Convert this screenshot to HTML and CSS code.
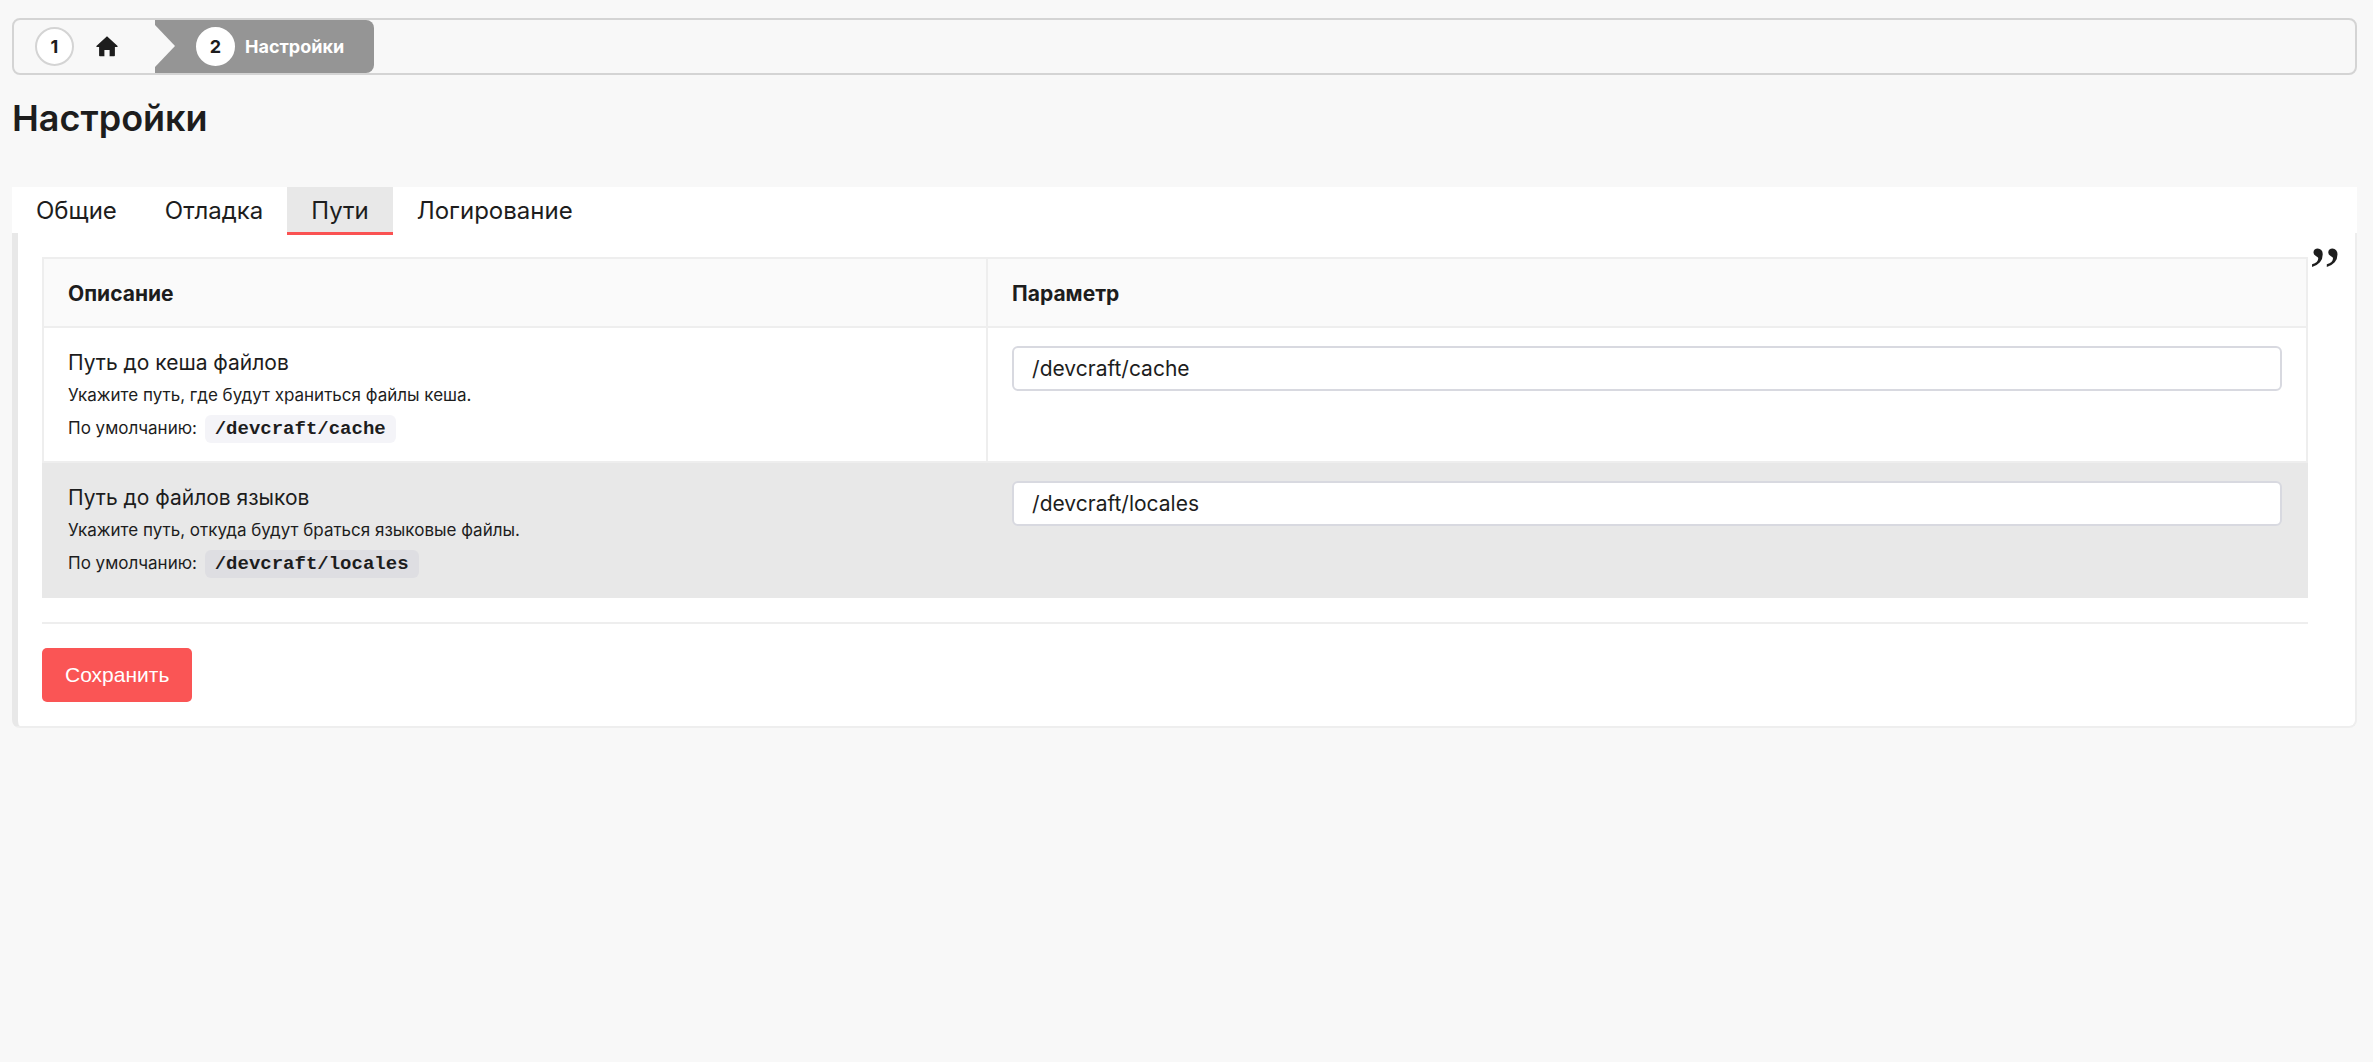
FILE: index.html
```html
<!DOCTYPE html>
<html lang="ru">
<head>
  <meta charset="UTF-8">
  <meta name="viewport" content="width=device-width, initial-scale=1.0">
  <title>Настройки</title>
  <link rel="stylesheet" href="styles.css">
</head>
<body>
  <nav class="breadcrumb">
    <a class="step" href="#">
      <span class="step-number">1</span>
      <svg class="home-icon" viewBox="0 0 22 21" aria-hidden="true">
        <path d="M11 0.3 L21.6 10 Q22 10.9 21 11 H18.9 V19.4 Q18.9 20.2 18.1 20.2 H13.6 V14 H8.4 V20.2 H3.9 Q3.1 20.2 3.1 19.4 V11 H1 Q0 10.9 0.4 10 Z"/>
      </svg>
    </a>
    <a class="step active" href="#">
      <span class="step-number">2</span>
      <span>Настройки</span>
    </a>
  </nav>

  <h1>Настройки</h1>

  <nav class="tabs">
    <a href="#general">Общие</a>
    <a href="#debug">Отладка</a>
    <a class="active" href="#paths">Пути</a>
    <a href="#logs">Логирование</a>
  </nav>

  <form class="panel" id="paths">
    <table class="settings">
      <thead>
        <tr>
          <th class="col-desc">Описание</th>
          <th>Параметр</th>
        </tr>
      </thead>
      <tbody>
        <tr>
          <td>
            <label for="cache">Путь до кеша файлов</label>
            <p>Укажите путь, где будут храниться файлы кеша.</p>
            <p>По умолчанию: <code>/devcraft/cache</code></p>
          </td>
          <td><input type="text" id="cache" value="/devcraft/cache"></td>
        </tr>
        <tr>
          <td>
            <label for="locales">Путь до файлов языков</label>
            <p>Укажите путь, откуда будут браться языковые файлы.</p>
            <p>По умолчанию: <code>/devcraft/locales</code></p>
          </td>
          <td><input type="text" id="locales" value="/devcraft/locales"></td>
        </tr>
      </tbody>
    </table>
    <hr>
    <button type="submit">Сохранить</button>
  </form>
</body>
</html>
```
FILE: styles.css
```css
* {
  box-sizing: border-box;
}
body {
  margin: 0;
  padding: 18px 16px 24px 12px;
  font-family: Inter, sans-serif;
  font-size: 21px;
  background: #f8f8f8;
  color: #1d1d1d;
}
a {
  color: inherit;
  text-decoration: none;
}

/* breadcrumb */
.breadcrumb {
  display: flex;
  height: 57px;
  border: 2px solid #d4d4d4;
  border-radius: 8px;
  font-size: 18px;
  font-weight: 700;
}
.step {
  display: flex;
  align-items: center;
  gap: 22px;
  padding: 0 37px 0 21px;
}
.step-number {
  display: flex;
  align-items: center;
  justify-content: center;
  width: 39px;
  height: 39px;
  border: 2px solid #d4d4d4;
  border-radius: 50%;
  background: #fff;
  color: #1d1d1d;
}
.home-icon {
  width: 22px;
  height: 21px;
  fill: #1d1d1d;
}
.step.active {
  position: relative;
  gap: 10px;
  padding: 0 30px 0 41px;
  border-radius: 0 8px 8px 0;
  background: #959595;
  color: #fff;
}
.step.active .step-number {
  border-color: #fff;
}
.step.active::before {
  content: "";
  position: absolute;
  left: 0;
  top: 5px;
  border: 21px solid transparent;
  border-left: 20px solid #f8f8f8;
  border-right: 0;
}

h1 {
  margin: 21px 0 47px;
  font-size: 36px;
  font-weight: 600;
  line-height: 44px;
}

/* tabs */
.tabs {
  display: flex;
  height: 46px;
  background: #fff;
  font-size: 24px;
}
.tabs a {
  height: 48px;
  padding: 0 24px;
  line-height: 48px;
}
.tabs a.active {
  position: relative;
  z-index: 1;
  background: #e8e8e8;
  border-bottom: 3px solid #fa5252;
}

/* content panel */
.panel {
  position: relative;
  padding: 24px 47px 24px 24px;
  background: #fff;
  border: 2px solid #eee;
  border-top: 0;
  border-left: 6px solid #e8e8e8;
  border-radius: 0 0 8px 8px;
}
.panel::after {
  content: "”";
  position: absolute;
  top: 3px;
  right: 14px;
  font-family: "Liberation Serif", serif;
  font-size: 72px;
  line-height: 72px;
}
.settings {
  width: 100%;
  border-collapse: collapse;
}
.settings th,
.settings td {
  padding: 18px 24px 16px;
  border: 2px solid #eee;
  text-align: left;
  vertical-align: top;
}
.settings th {
  height: 69px;
  background: #fafafa;
  font-weight: 700;
  vertical-align: middle;
}
.settings .col-desc {
  width: 41.7%;
}
.settings tbody tr:nth-child(even) td {
  background: #e8e8e8;
  border-color: #e8e8e8;
}
.settings label {
  display: block;
  line-height: 33px;
}
.settings p {
  margin: 0;
  font-size: 17px;
  line-height: 33px;
}
.settings code {
  margin-left: 3px;
  padding: 3px 10px;
  border-radius: 6px;
  background: rgba(100, 100, 150, 0.07);
  font-family: "Liberation Mono", monospace;
  font-size: 19px;
  font-weight: 700;
  line-height: 1;
}
.settings input {
  display: block;
  width: 100%;
  height: 45px;
  padding: 0 18px;
  border: 2px solid #d8d9e0;
  border-radius: 6px;
  background: #fff;
  color: #1d1d1d;
  font: inherit;
}
hr {
  height: 2px;
  margin: 24px 0;
  border: 0;
  background: #eee;
}
button {
  display: block;
  height: 54px;
  padding: 0 23px;
  border: 0;
  border-radius: 5px;
  background: #fa5555;
  color: #fff;
  font-family: "Liberation Sans", Arial, sans-serif;
  font-size: 21px;
  cursor: pointer;
}
```
